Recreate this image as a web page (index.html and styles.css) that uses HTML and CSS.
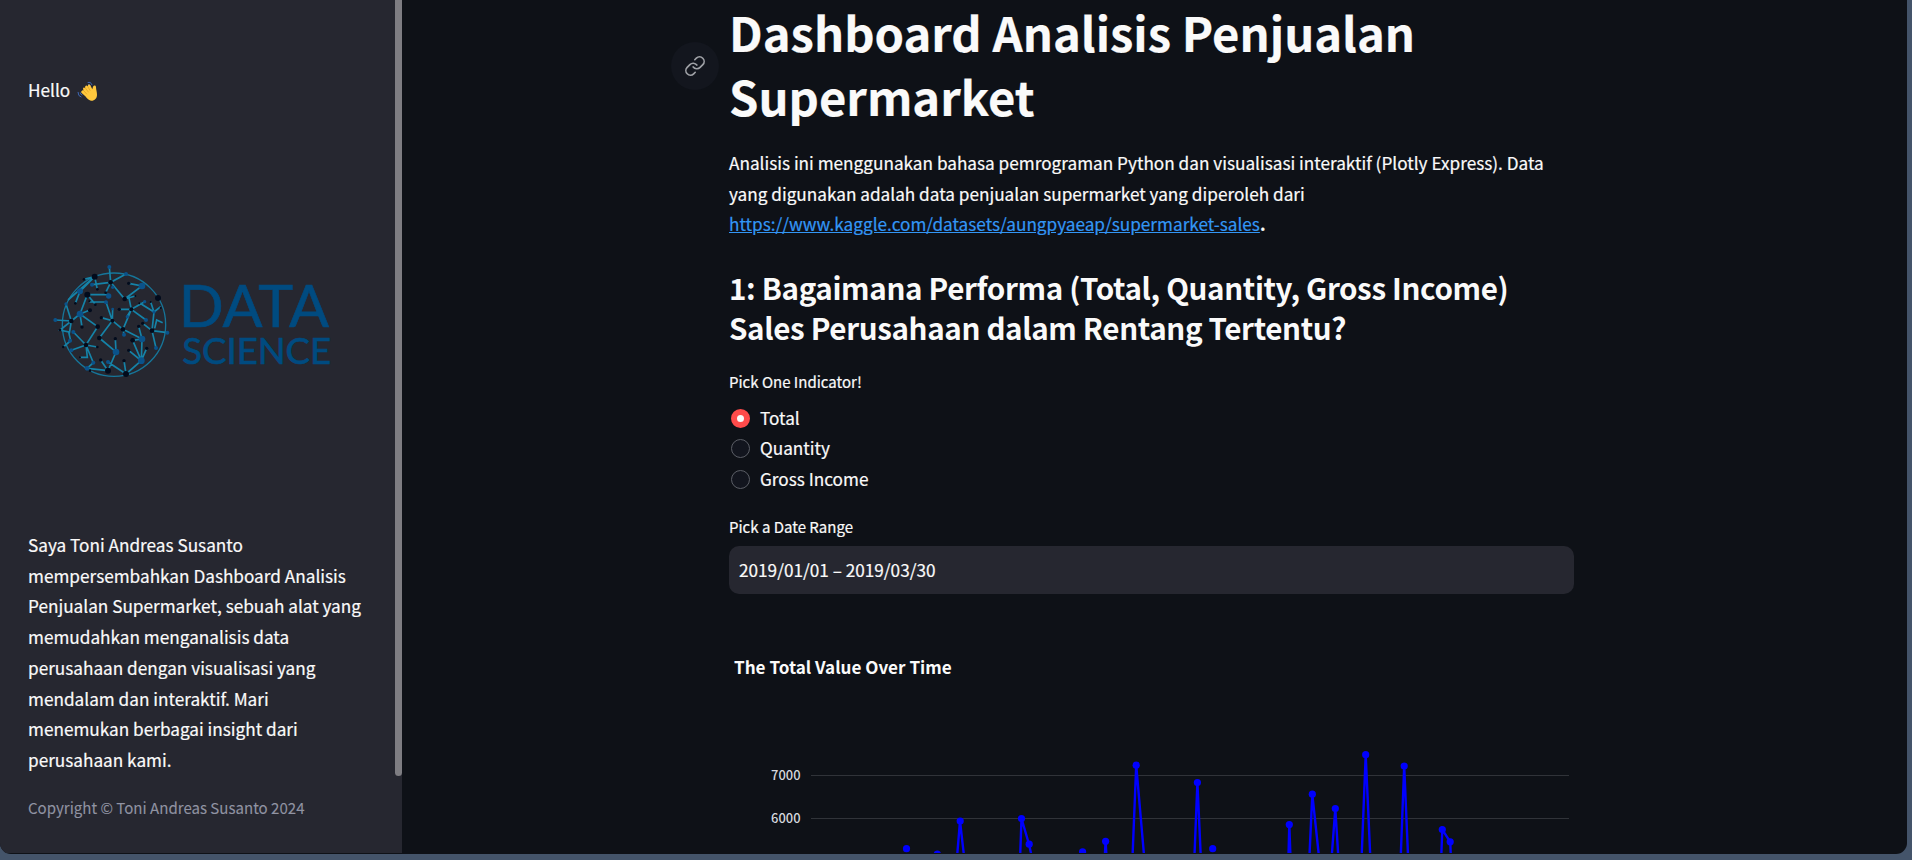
FILE: index.html
```html
<!DOCTYPE html>
<html lang="id">
<head>
<meta charset="utf-8">
<title>Dashboard Analisis Penjualan Supermarket</title>
<link rel="stylesheet" href="styles.css">
</head>
<body>
<div class="window">
  <aside class="sidebar">
    <p class="hello">Hello
      <svg class="wave" viewBox="0 0 60 60" width="20" height="20">
        <g fill="none" stroke="#3f68b5" stroke-width="3" stroke-linecap="round">
          <path d="M33 4q8-4 12 7M34 11q4-3 6 2M3 34q0 12 9 14M10 36q0 5 5 6"/>
        </g>
        <path fill="#ffc83d" d="M14 30c2-3 4-3 6-1l-2-6c1-4 4-4 6-1l1-7c3-3 5-2 7 1l2-5c4-2 6 1 7 4l5 10 2-8c3-5 8-4 9 1 0 8 3 15 3 23 0 11-8 19-18 18-8-1-12-7-17-13L14 36c-2-2-2-4 0-6z"/>
        <path fill="none" stroke="#d99a20" stroke-width="2" stroke-linecap="round" d="M20 29l9 10M25 21l9 12M32 16l7 12"/>
      </svg>
    </p>
    <svg class="logo" viewBox="0 0 930 420" width="310" height="140">
      <circle cx="222" cy="224" r="155" fill="none" stroke="#16769a" stroke-width="4"/>
      <g fill="none" stroke="#1583a8" stroke-width="5">
        <path d="M208 51L212 97L258 72M212 97L156 104M212 97L197 128M212 97L254 147L306 108L266 100M254 147L286 138M164 80L172 118M164 80L120 124L106 160M164 80L132 88M142 134H206M142 134L166 163M142 134L120 192M148 156H198L217 212L218 176M120 192L150 180M120 192L126 231M120 192L173 230L138 285L100 246M138 285L94 301M138 285L172 291M138 285L160 338L141 355L204 362L182 330M178 264L217 212L184 203M217 212L249 238L274 178L262 198M274 178L238 178M274 178L314 155M274 178L318 210M274 178L266 140M249 238L252 254M249 238L306 267L296 229M306 267L278 271M306 267L304 332L266 301M278 271L304 332L320 295M178 264L228 306L226 266M228 306L204 362M204 336L258 372L252 332M304 332L258 372M336 242L382 248M336 242L308 220M336 242L348 294M336 242L342 186L300 160M342 186L362 170M332 156L342 186M344 235L350 210L368 218M94 213L46 210M94 213L78 162M94 213L60 240L86 246L92 272L70 291M94 213L88 250M94 213L120 192M120 322H142L138 285M164 80L84 150"/>
      </g>
      <g fill="#0a528a">
        <circle cx="208" cy="51" r="6"/><circle cx="258" cy="72" r="6"/><circle cx="156" cy="104" r="6"/><circle cx="120" cy="124" r="9"/><circle cx="306" cy="108" r="10"/><circle cx="206" cy="138" r="8"/><circle cx="120" cy="192" r="10"/><circle cx="198" cy="157" r="6"/><circle cx="218" cy="112" r="5"/><circle cx="78" cy="162" r="5"/><circle cx="46" cy="210" r="6"/><circle cx="100" cy="246" r="6"/><circle cx="90" cy="272" r="6"/><circle cx="94" cy="301" r="6"/><circle cx="141" cy="355" r="7"/><circle cx="160" cy="338" r="6"/><circle cx="204" cy="336" r="6"/><circle cx="228" cy="306" r="10"/><circle cx="306" cy="267" r="10"/><circle cx="304" cy="332" r="10"/><circle cx="252" cy="254" r="6"/><circle cx="262" cy="200" r="5"/><circle cx="314" cy="155" r="5"/><circle cx="318" cy="210" r="6"/><circle cx="342" cy="186" r="5"/><circle cx="348" cy="294" r="6"/><circle cx="382" cy="248" r="6"/><circle cx="218" cy="177" r="4"/>
      </g>
      <g fill="#020b1c">
        <circle cx="164" cy="80" r="9"/><circle cx="142" cy="134" r="9"/><circle cx="354" cy="144" r="9"/><circle cx="204" cy="362" r="9"/><circle cx="258" cy="372" r="9"/><circle cx="212" cy="97" r="7"/><circle cx="254" cy="147" r="7"/><circle cx="274" cy="178" r="6"/><circle cx="217" cy="212" r="6"/><circle cx="249" cy="238" r="7"/><circle cx="278" cy="271" r="7"/><circle cx="336" cy="242" r="7"/><circle cx="94" cy="213" r="7"/><circle cx="173" cy="230" r="7"/><circle cx="178" cy="264" r="7"/><circle cx="138" cy="285" r="7"/><circle cx="150" cy="181" r="6"/>
        <circle cx="132" cy="88" r="4"/><circle cx="172" cy="118" r="4"/><circle cx="106" cy="160" r="4"/><circle cx="166" cy="164" r="4"/><circle cx="148" cy="154" r="3"/><circle cx="197" cy="128" r="4"/><circle cx="266" cy="100" r="5"/><circle cx="286" cy="138" r="3"/><circle cx="238" cy="178" r="5"/><circle cx="184" cy="203" r="5"/><circle cx="126" cy="231" r="5"/><circle cx="172" cy="291" r="4"/><circle cx="182" cy="330" r="5"/><circle cx="226" cy="266" r="5"/><circle cx="266" cy="301" r="5"/><circle cx="320" cy="295" r="5"/><circle cx="252" cy="332" r="5"/><circle cx="296" cy="229" r="5"/><circle cx="308" cy="220" r="5"/><circle cx="60" cy="240" r="4"/><circle cx="70" cy="291" r="4"/><circle cx="120" cy="322" r="3"/><circle cx="332" cy="156" r="3"/><circle cx="362" cy="174" r="3"/><circle cx="298" cy="160" r="3"/><circle cx="150" cy="362" r="4"/>
      </g>
      <text class="logo-text" x="416" y="231" font-size="175" textLength="451" lengthAdjust="spacingAndGlyphs">DATA</text>
      <text class="logo-text" x="427" y="341" font-size="108" textLength="446" lengthAdjust="spacingAndGlyphs">SCIENCE</text>
    </svg>
    <p class="about">Saya Toni Andreas Susanto<br>mempersembahkan Dashboard Analisis<br>Penjualan Supermarket, sebuah alat yang<br>memudahkan menganalisis data<br>perusahaan dengan visualisasi yang<br>mendalam dan interaktif. Mari<br>menemukan berbagai insight dari<br>perusahaan kami.</p>
    <p class="copyright">Copyright © Toni Andreas Susanto 2024</p>
    <div class="scroll-thumb"></div>
  </aside>
  <main class="main">
    <div class="column">
      <div class="heading">
        <a class="anchor">
          <svg viewBox="0 0 24 24" width="22" height="22" fill="none" stroke="#a0a2a7" stroke-width="1.8" stroke-linecap="round" stroke-linejoin="round"><path d="M10 13a5 5 0 0 0 7.54.54l3-3a5 5 0 0 0-7.07-7.07l-1.72 1.71"/><path d="M14 11a5 5 0 0 0-7.54-.54l-3 3a5 5 0 0 0 7.07 7.07l1.71-1.71"/></svg>
        </a>
        <h1>Dashboard Analisis Penjualan<br>Supermarket</h1>
      </div>
      <p class="intro">Analisis ini menggunakan bahasa pemrograman Python dan visualisasi interaktif (Plotly Express). Data<br>yang digunakan adalah data penjualan supermarket yang diperoleh dari<br><a class="link">https://www.kaggle.com/datasets/aungpyaeap/supermarket-sales</a><b>.</b></p>
      <h2>1: Bagaimana Performa (Total, Quantity, Gross Income)<br>Sales Perusahaan dalam Rentang Tertentu?</h2>
      <div class="label">Pick One Indicator!</div>
      <div class="radios">
        <div class="option"><span class="radio checked"></span>Total</div>
        <div class="option"><span class="radio"></span>Quantity</div>
        <div class="option"><span class="radio"></span>Gross Income</div>
      </div>
      <div class="label">Pick a Date Range</div>
      <div class="date-input">2019/01/01 – 2019/03/30</div>
      <svg class="chart" viewBox="729 640 845 214" width="845" height="214">
        <text class="chart-title" x="734" y="674.5">The Total Value Over Time</text>
        <path d="M811 776.5H1569M811 819.5H1569" stroke="#303339" stroke-width="1"/>
        <g class="ticks"><text x="800.5" y="781">7000</text><text x="800.5" y="824">6000</text></g>
        <g class="series">
          <path d="M957.2 856L960 822L963.9 856M1020.2 856L1021.5 819.5L1029 845.2L1031.4 856M1104.9 856L1105.6 842.3L1106.4 856M1132.6 856L1136.2 766.2L1144 856M1194.5 856L1197.4 783.5L1200.7 856M1288.5 856L1289.3 825.6L1290.4 856M1309.5 856L1312.3 795.2L1318.8 856M1331.8 856L1335.3 809.5L1338.2 856M1361.7 856L1365.7 755.7L1370.2 856M1400.8 856L1404.2 767L1408 856M1441.3 856L1442.3 830.5L1450.2 842.8L1450.8 856"/>
          <circle cx="906.5" cy="849.7" r="3.6"/><circle cx="937.3" cy="855" r="3.6"/><circle cx="960.2" cy="822" r="3.6"/><circle cx="1021.5" cy="819.5" r="3.6"/><circle cx="1029.2" cy="845.2" r="3.6"/><circle cx="1082.6" cy="852.8" r="3.6"/><circle cx="1105.6" cy="842.3" r="3.6"/><circle cx="1136.2" cy="766.2" r="3.6"/><circle cx="1197.4" cy="783.5" r="3.6"/><circle cx="1212.7" cy="849.7" r="3.6"/><circle cx="1289.3" cy="825.6" r="3.6"/><circle cx="1312.3" cy="795.2" r="3.6"/><circle cx="1335.3" cy="809.5" r="3.6"/><circle cx="1365.7" cy="755.7" r="3.6"/><circle cx="1404.2" cy="767" r="3.6"/><circle cx="1442.3" cy="830.5" r="3.6"/><circle cx="1450.2" cy="842.8" r="3.6"/>
        </g>
      </svg>
    </div>
  </main>
</div>
</body>
</html>
```
FILE: styles.css
```css
* { box-sizing: border-box; }
body {
  margin: 0;
  height: 860px;
  overflow: hidden;
  background: #44546a;
  color: #fafafa;
  font-family: "Noto Sans CJK SC", "Noto Sans", sans-serif;
  font-size: 17.19px;
  line-height: 30.72px;
  white-space: nowrap;
  -webkit-text-stroke: 0.2px;
}
h1, h2, p { margin: 0; }
.window {
  display: flex;
  width: 1907px;
  height: 854px;
  overflow: hidden;
  background: #0e1117;
  border-radius: 0 0 11px 11px;
}
.sidebar {
  position: relative;
  width: 402px;
  height: 853px;
  padding: 75px 0 0 28px;
  background: #262730;
}
.hello { display: flex; align-items: center; gap: 7px; height: 31px; }
.logo { display: block; margin: 144px 0 140px 12px; }
.logo-text { font-family: Lato, sans-serif; fill: #004b80; stroke: #004b80; stroke-width: 2; }
.copyright { margin-top: 17px; font-size: 15.05px; color: #9093a2; -webkit-text-stroke: 0.1px; }
.scroll-thumb {
  position: absolute;
  top: 0;
  right: 0;
  width: 7px;
  height: 776px;
  background: #7e7d82;
  border-radius: 0 0 4px 4px;
}
.main { flex: 1; padding-left: 327px; }
.column { width: 845px; }
.heading { position: relative; }
.anchor {
  position: absolute;
  left: -58px;
  top: 42px;
  display: flex;
  align-items: center;
  justify-content: center;
  width: 48px;
  height: 48px;
  border-radius: 50%;
  background: #13161e;
}
h1 { font-size: 47.2px; line-height: 64px; font-weight: 700; }
.intro { margin-top: 20px; }
.link { color: #3396f5; text-decoration: underline; }
h2 {
  margin-top: 27.5px;
  font-size: 29.6px;
  line-height: 40.3px;
  font-weight: 600;
  letter-spacing: -0.36px;
  -webkit-text-stroke: 0;
}
.label { margin-top: 20px; height: 27px; font-size: 15px; line-height: 27px; }
.radios { margin: 7.5px 0 18px; }
.option { display: flex; align-items: center; gap: 10px; height: 30.72px; padding-left: 2px; }
.radio {
  width: 19px;
  height: 19px;
  border: 1px solid #5b5e66;
  border-radius: 50%;
  background: #12151e;
}
.radio.checked { border: 6px solid #ff4b4b; background: #fafafa; }
.radios + .label { margin-top: 0; }
.date-input {
  height: 48px;
  margin-top: 6px;
  padding: 0 10px;
  line-height: 48px;
  background: #262730;
  border-radius: 10px;
}
.chart { display: block; margin-top: 45px; }
.chart-title { font-size: 17.1px; font-weight: 700; fill: #fafafa; }
.ticks { font-size: 12.9px; font-weight: 500; fill: #d5d7de; text-anchor: end; }
.series path { fill: none; stroke: #00f; stroke-width: 2.4; }
.series circle { fill: #00f; }
```
